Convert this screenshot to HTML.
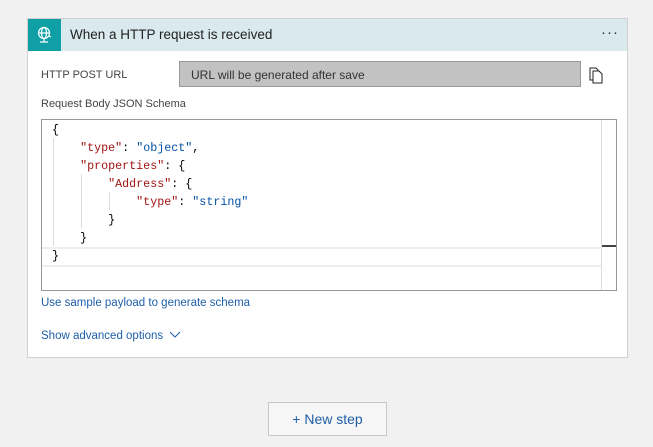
<!DOCTYPE html>
<html><head><style>
body{margin:0;width:653px;height:447px;background:#f1f1f1;font-family:"Liberation Sans",sans-serif;position:relative;overflow:hidden}
.card{position:absolute;left:27px;top:18px;width:601px;height:340px;background:#fff;border:1px solid #d0d0d0;box-sizing:border-box}
.hdr{position:absolute;left:0;top:0;width:100%;height:32px;background:#d9e9ee}
.ic{position:absolute;left:0;top:0;width:33px;height:32px;background:#0f9fa5}
.title{position:absolute;left:42px;top:8px;font-size:13.5px;color:#222}
.dots{position:absolute;right:8px;top:5px;color:#333;font-size:15px;letter-spacing:1px}
.lbl{position:absolute;font-size:11px;color:#444}
.url{position:absolute;left:151px;top:42px;width:402px;height:26px;background:#c2c2c2;border:1px solid #9a9a9a;box-sizing:border-box;font-size:12px;color:#333;padding:6px 0 0 11px}
.ed{position:absolute;left:13px;top:100px;width:576px;height:172px;border:1px solid #999;box-sizing:border-box;font-family:"Liberation Mono",monospace;font-size:11.7px}
.ln{position:absolute;left:10px;white-space:pre;color:#000}
.k{color:#a31515}.s{color:#0451a5}
.sb{position:absolute;right:0;top:0;width:14px;height:100%;border-left:1px solid #ddd}
.cur{position:absolute;left:0;top:127px;width:560px;height:16px;border-top:2px solid #eee;border-bottom:2px solid #eee}
.guide{position:absolute;width:1px;background:#ddd}
.link{position:absolute;font-size:11.5px;color:#1e5fa8}
.btn{position:absolute;left:268px;top:402px;width:119px;height:34px;border:1px solid #c8c8c8;box-sizing:border-box;background:#f6f6f6;color:#1e5fa8;font-size:14px;text-align:center;line-height:32px}
</style></head><body>
<div class="card">
 <div class="hdr">
  <div class="ic"><svg width="33" height="32" viewBox="0 0 33 32"><g fill="none" stroke="#fff" stroke-width="1.2"><circle cx="16" cy="14" r="5.5"/><ellipse cx="16" cy="14" rx="2.5" ry="5.5"/><path d="M10.5 14h11M16 19.5v3M12 23h8M21 17l2 1"/></g></svg></div>
  <div class="title">When a HTTP request is received</div>
  <div class="dots">···</div>
 </div>
 <div class="lbl" style="left:13px;top:50px">HTTP POST URL</div>
 <div class="url">URL will be generated after save</div>
 <svg style="position:absolute;left:560px;top:47px" width="16" height="18" viewBox="0 0 16 18"><path d="M2 2h6l2 2v10H2z" fill="#fff" stroke="#222"/><path d="M5 5h6l3 3v9H5z" fill="#fff" stroke="#222"/></svg>
 <div class="lbl" style="left:13px;top:79px">Request Body JSON Schema</div>
 <div class="ed">
  <div class="cur"></div>
  <div class="guide" style="left:11px;top:18px;height:108px"></div>
  <div class="guide" style="left:39px;top:54px;height:54px"></div>
  <div class="guide" style="left:67px;top:72px;height:18px"></div>
  <div class="ln" style="top:3px">{</div>
  <div class="ln" style="top:21px">    <span class="k">"type"</span>: <span class="s">"object"</span>,</div>
  <div class="ln" style="top:39px">    <span class="k">"properties"</span>: {</div>
  <div class="ln" style="top:57px">        <span class="k">"Address"</span>: {</div>
  <div class="ln" style="top:75px">            <span class="k">"type"</span>: <span class="s">"string"</span></div>
  <div class="ln" style="top:93px">        }</div>
  <div class="ln" style="top:111px">    }</div>
  <div class="ln" style="top:129px">}</div>
  <div class="sb"><div style="position:absolute;left:0;top:125px;width:14px;height:2px;background:#444"></div></div>
 </div>
 <div class="link" style="left:13px;top:278px">Use sample payload to generate schema</div>
 <div class="link" style="left:13px;top:311px">Show advanced options <svg width="12" height="8" viewBox="0 0 12 8" style="margin-left:3px"><path d="M1 1l5 5 5-5" fill="none" stroke="#1e5fa8"/></svg></div>
</div>
<div class="btn">+ New step</div>
</body></html>
